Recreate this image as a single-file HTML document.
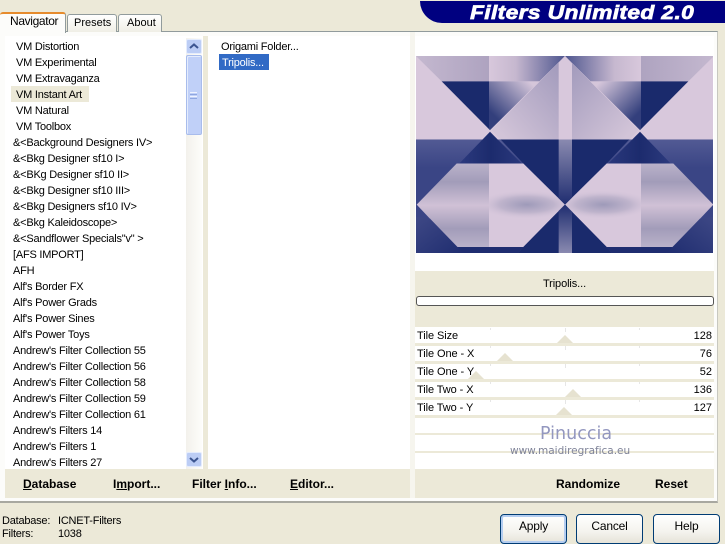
<!DOCTYPE html>
<html><head><meta charset="utf-8">
<style>
html,body{margin:0;padding:0}
body{width:725px;height:535px;overflow:hidden;background:#ece9d8;position:relative;font-family:"Liberation Sans",sans-serif;font-size:11px;color:#000}
div{position:absolute;box-sizing:border-box}
.t{white-space:nowrap;line-height:18px;height:18px;letter-spacing:-.22px}
.b{font-weight:bold;white-space:nowrap;line-height:16px;font-size:12px;top:476px}
.b u{text-decoration:underline}
.btn{top:514px;width:67px;height:30px;border:1px solid #003c74;border-radius:4px;background:linear-gradient(#fff,#f4f3ee 60%,#e6e3d8);text-align:center;line-height:22px;font-size:12px;letter-spacing:-.2px}
.row{left:415px;width:299px;background:#fff}
.ln{left:415px;width:299px;height:3px;background:#ece9d8}
.tri{width:0;height:0;border-left:8px solid transparent;border-right:8px solid transparent;border-bottom:8px solid #e6e2d0}
.lb{left:417px;line-height:18px;white-space:nowrap;letter-spacing:-.08px}
.val{right:13px;line-height:18px}
.tick{width:1px;height:2px;background:#e6e6e6}
</style></head><body>

<!-- main panel -->
<div style="left:0;top:31px;width:718px;height:472px;background:#fcfcfa;border-top:1px solid #919b9c;border-right:1px solid #c8c8c0;border-bottom:2px solid #a8a8a0"></div>

<!-- tabs -->
<div style="left:0;top:12px;width:66px;height:21px;background:#fcfcfa;border-top:2px solid #e68b2c;border-right:1px solid #919b9c;border-radius:3px 3px 0 0"></div>
<div class="t" style="left:10px;top:12px;font-size:12px;letter-spacing:-.35px">Navigator</div>
<div style="left:67px;top:14px;width:50px;height:18px;background:linear-gradient(#fff,#f0efe6);border:1px solid #919b9c;border-bottom:0;border-radius:3px 3px 0 0"></div>
<div class="t" style="left:74px;top:14px;letter-spacing:0">Presets</div>
<div style="left:118px;top:14px;width:44px;height:18px;background:linear-gradient(#fff,#f0efe6);border:1px solid #919b9c;border-bottom:0;border-radius:3px 3px 0 0"></div>
<div class="t" style="left:127px;top:14px;letter-spacing:0">About</div>

<!-- logo -->
<div style="left:420px;top:1px;width:305px;height:22px;background:#000080;border-radius:0 0 0 26px"></div>
<div style="left:470px;top:2px;line-height:22px;font-size:19.5px;font-weight:bold;font-style:italic;color:#fff;white-space:nowrap;letter-spacing:.3px;-webkit-text-stroke:.7px #fff;transform-origin:0 50%;transform:scaleX(1.17)">Filters Unlimited 2.0</div>

<!-- white zones -->
<div style="left:5px;top:36px;width:198px;height:433px;background:#fff"></div>
<div style="left:203px;top:36px;width:5px;height:433px;background:#ece9d8"></div>
<div style="left:208px;top:36px;width:202px;height:433px;background:#fff"></div>
<div style="left:410px;top:32px;width:5px;height:466px;background:#f6f5ee"></div>
<div style="left:415px;top:36px;width:299px;height:235px;background:#fff"></div>

<!-- list -->
<div style="left:11px;top:86px;width:78px;height:16px;background:#ece9d8"></div>
<div class="t" style="left:16px;top:38px">VM Distortion</div>
<div class="t" style="left:16px;top:54px">VM Experimental</div>
<div class="t" style="left:16px;top:70px">VM Extravaganza</div>
<div class="t" style="left:16px;top:86px">VM Instant Art</div>
<div class="t" style="left:16px;top:102px">VM Natural</div>
<div class="t" style="left:16px;top:118px">VM Toolbox</div>
<div class="t" style="left:13px;top:134px">&amp;&lt;Background Designers IV&gt;</div>
<div class="t" style="left:13px;top:150px">&amp;&lt;Bkg Designer sf10 I&gt;</div>
<div class="t" style="left:13px;top:166px">&amp;&lt;BKg Designer sf10 II&gt;</div>
<div class="t" style="left:13px;top:182px">&amp;&lt;Bkg Designer sf10 III&gt;</div>
<div class="t" style="left:13px;top:198px">&amp;&lt;Bkg Designers sf10 IV&gt;</div>
<div class="t" style="left:13px;top:214px">&amp;&lt;Bkg Kaleidoscope&gt;</div>
<div class="t" style="left:13px;top:230px">&amp;&lt;Sandflower Specials"v" &gt;</div>
<div class="t" style="left:13px;top:246px">[AFS IMPORT]</div>
<div class="t" style="left:13px;top:262px">AFH</div>
<div class="t" style="left:13px;top:278px">Alf's Border FX</div>
<div class="t" style="left:13px;top:294px">Alf's Power Grads</div>
<div class="t" style="left:13px;top:310px">Alf's Power Sines</div>
<div class="t" style="left:13px;top:326px">Alf's Power Toys</div>
<div class="t" style="left:13px;top:342px">Andrew's Filter Collection 55</div>
<div class="t" style="left:13px;top:358px">Andrew's Filter Collection 56</div>
<div class="t" style="left:13px;top:374px">Andrew's Filter Collection 58</div>
<div class="t" style="left:13px;top:390px">Andrew's Filter Collection 59</div>
<div class="t" style="left:13px;top:406px">Andrew's Filter Collection 61</div>
<div class="t" style="left:13px;top:422px">Andrew's Filters 14</div>
<div class="t" style="left:13px;top:438px">Andrew's Filters 1</div>
<div class="t" style="left:13px;top:454px;height:15px;overflow:hidden">Andrew's Filters 27</div>

<!-- scrollbar -->
<div style="left:186px;top:38px;width:16px;height:431px;background:linear-gradient(90deg,#f3f1ec,#fdfdfa)"></div>
<div style="left:186px;top:39px;width:16px;height:15px;background:#bccdf5;border:1px solid #e4ecfd;border-radius:2px"></div>
<svg style="position:absolute;left:189px;top:43px" width="10" height="7"><path d="M1 5 L5 1.5 L9 5" fill="none" stroke="#3c5590" stroke-width="2"/></svg>
<div style="left:186px;top:55px;width:16px;height:80px;background:#c0d0f8;border:1px solid #a8bcec;border-radius:2px;box-shadow:inset 1px 1px 0 #e4ecfd"></div>
<div style="left:190px;top:92px;width:7px;height:1px;background:#eef2fe;box-shadow:0 2px 0 #8fa6e0,0 4px 0 #eef2fe,0 6px 0 #8fa6e0"></div>
<div style="left:186px;top:452px;width:16px;height:15px;background:#bccdf5;border:1px solid #e4ecfd;border-radius:2px"></div>
<svg style="position:absolute;left:189px;top:456px" width="10" height="7"><path d="M1 2 L5 5.5 L9 2" fill="none" stroke="#3c5590" stroke-width="2"/></svg>

<!-- middle list -->
<div class="t" style="left:221px;top:38px">Origami Folder...</div>
<div style="left:219px;top:54px;width:50px;height:16px;background:#316ac5"></div>
<div class="t" style="left:222px;top:54px;color:#fff">Tripolis...</div>

<!-- preview -->
<svg style="position:absolute;left:416px;top:56px" width="297" height="197" viewBox="18 18 891 590" preserveAspectRatio="none">
<defs>
<linearGradient id="g1" x1="0" x2="1" y1="0" y2="0"><stop offset="0" stop-color="#c4b8cf"/><stop offset="1" stop-color="#aea3c0"/></linearGradient>
<linearGradient id="g2" x1="0" x2="1" y1="0" y2="0"><stop offset="0" stop-color="#d8c8dc"/><stop offset=".35" stop-color="#c6b8cf"/><stop offset="1" stop-color="#4f568f"/></linearGradient>
<linearGradient id="g3" x1="1" x2="0" y1="0" y2="1"><stop offset=".1" stop-color="#d5c6da"/><stop offset=".8" stop-color="#333f7c"/></linearGradient>
<linearGradient id="g4" x1="0" x2="1" y1="1" y2="0"><stop offset=".1" stop-color="#d2c4d8"/><stop offset="1" stop-color="#9d96b9"/></linearGradient>
<linearGradient id="g5" x1="0" x2="0" y1="0" y2="1"><stop offset="0" stop-color="#525a94"/><stop offset=".25" stop-color="#3a4585"/><stop offset="1" stop-color="#3a4585"/></linearGradient>
<linearGradient id="g6" x1="0" x2="0" y1="0" y2="1"><stop offset="0" stop-color="#8a8ab0"/><stop offset="1" stop-color="#1f2d70"/></linearGradient>
<linearGradient id="g7" x1="0" x2="0" y1="0" y2="1"><stop offset="0" stop-color="#1f2d70"/><stop offset="1" stop-color="#8a8ab0"/></linearGradient>
<linearGradient id="g8" x1="0" x2="0" y1="0" y2="1"><stop offset="0" stop-color="#bab2ca"/><stop offset=".22" stop-color="#a29cb9"/><stop offset=".5" stop-color="#d0c1d6"/><stop offset=".78" stop-color="#a29cb9"/><stop offset="1" stop-color="#bab2ca"/></linearGradient>
<radialGradient id="g10" cx=".5" cy=".5" r=".5"><stop offset="0" stop-color="#9e9ab9"/><stop offset=".55" stop-color="#bfb4cc"/><stop offset="1" stop-color="#d8c8dc" stop-opacity="0"/></radialGradient>
<linearGradient id="g12" x1="0" x2="1" y1="0" y2="1"><stop offset="0" stop-color="#3e4885"/><stop offset="1" stop-color="#1f2d70"/></linearGradient>
<linearGradient id="g15" x1="0" x2="1" y1="0" y2="0"><stop offset="0" stop-color="#2c3a7e"/><stop offset=".5" stop-color="#1c2b6d"/><stop offset="1" stop-color="#2a387c"/></linearGradient>
<clipPath id="c"><rect x="18" y="18" width="891" height="590"/></clipPath>
<clipPath id="hr"><polygon points="237,340 340,340 465,463 340,590 237,590"/></clipPath>
<g id="half">
  <rect x="18" y="18" width="447" height="250" fill="#d8c8dc"/>
  <polygon points="18,18 237,18 237,94 95,94" fill="url(#g1)"/>
  <polygon points="237,18 465,18 388,94 237,94" fill="url(#g2)"/>
  <polygon points="95,94 237,94 237,237" fill="#1a2a6c"/>
  <polygon points="237,94 388,94 240,240 237,237" fill="url(#g3)"/>
  <polygon points="245,240 465,18 465,268 272,268" fill="url(#g4)"/>
  <rect x="18" y="268" width="447" height="340" fill="url(#g5)"/>
  <polygon points="272,268 465,268 465,463 340,340" fill="#1a2a6c"/>
  <polygon points="240,245 335,340 148,340" fill="url(#g15)"/>
  <polygon points="20,463 140,340 237,340 237,590 140,590" fill="url(#g8)"/>
  <polygon points="237,340 340,340 465,463 340,590 237,590" fill="#d8c8dc"/>
  <g clip-path="url(#hr)"><ellipse cx="350" cy="463" rx="150" ry="44" fill="url(#g10)"/></g>
  <polygon points="465,463 465,608 325,608 340,590" fill="#1a2a6c"/>
  <polygon points="140,590 340,590 325,608 160,608" fill="#1f2d70"/>
  <polygon points="18,500 18,608 160,608 60,505" fill="url(#g12)"/>
</g>
</defs>
<g clip-path="url(#c)">
<use href="#half"/>
<use href="#half" transform="translate(930,0) scale(-1,1)"/>
<polygon points="465,18 486,40 486,268 446,268 446,38" fill="#d8c8dc"/>
<polygon points="446,268 486,268 486,442 465,463 446,444" fill="url(#g6)"/>
<polygon points="465,463 486,484 486,608 446,608 446,482" fill="url(#g7)"/>
</g>
</svg>

<!-- right panel controls -->
<div style="left:415px;top:271px;width:299px;height:56px;background:#ece9d8"></div>
<div style="left:415px;top:276px;width:299px;text-align:center;line-height:16px;letter-spacing:-.1px">Tripolis...</div>
<div style="left:416px;top:296px;width:298px;height:10px;background:#fff;border:1px solid #555;border-radius:3px"></div>

<div class="row" style="top:327px;height:142px"></div>
<div class="ln" style="top:343px"></div>
<div class="ln" style="top:361px"></div>
<div class="ln" style="top:379px"></div>
<div class="ln" style="top:397px"></div>
<div class="ln" style="top:415px"></div>
<div class="ln" style="top:433px;height:2px"></div>
<div class="ln" style="top:451px;height:2px"></div>

<div class="tri" style="left:557px;top:335px"></div>
<div class="tri" style="left:497px;top:353px"></div>
<div class="tri" style="left:468px;top:371px"></div>
<div class="tri" style="left:565px;top:389px"></div>
<div class="tri" style="left:556px;top:407px"></div>

<div class="tick" style="left:490px;top:328px"></div><div class="tick" style="left:565px;top:328px;height:4px"></div><div class="tick" style="left:639px;top:328px"></div>
<div class="tick" style="left:490px;top:346px"></div><div class="tick" style="left:565px;top:346px;height:4px"></div><div class="tick" style="left:639px;top:346px"></div>
<div class="tick" style="left:490px;top:364px"></div><div class="tick" style="left:565px;top:364px;height:4px"></div><div class="tick" style="left:639px;top:364px"></div>
<div class="tick" style="left:490px;top:382px"></div><div class="tick" style="left:565px;top:382px;height:4px"></div><div class="tick" style="left:639px;top:382px"></div>
<div class="tick" style="left:490px;top:400px"></div><div class="tick" style="left:565px;top:400px;height:4px"></div><div class="tick" style="left:639px;top:400px"></div>

<div class="lb" style="top:327px">Tile Size</div><div class="val" style="top:327px">128</div>
<div class="lb" style="top:345px">Tile One - X</div><div class="val" style="top:345px">76</div>
<div class="lb" style="top:363px">Tile One - Y</div><div class="val" style="top:363px">52</div>
<div class="lb" style="top:381px">Tile Two - X</div><div class="val" style="top:381px">136</div>
<div class="lb" style="top:399px">Tile Two - Y</div><div class="val" style="top:399px">127</div>

<!-- watermark -->
<div style="left:540px;top:424px;font-family:'DejaVu Sans',sans-serif;font-size:17.5px;line-height:20px;color:#9397bf;white-space:nowrap">Pinuccia</div>
<div style="left:510px;top:444px;font-family:'DejaVu Sans',sans-serif;font-size:10.5px;line-height:14px;color:#7f8398;white-space:nowrap;letter-spacing:-.02px">www.maidiregrafica.eu</div>

<!-- bottom bars -->
<div style="left:5px;top:469px;width:405px;height:29px;background:#ece9d8"></div>
<div style="left:415px;top:469px;width:299px;height:29px;background:#ece9d8"></div>
<div class="b" style="left:23px"><u>D</u>atabase</div>
<div class="b" style="left:113px">I<u>m</u>port...</div>
<div class="b" style="left:192px">Filter <u>I</u>nfo...</div>
<div class="b" style="left:290px"><u>E</u>ditor...</div>
<div class="b" style="left:556px">Randomize</div>
<div class="b" style="left:655px">Reset</div>

<!-- status -->
<div class="t" style="left:2px;top:512px">Database:</div>
<div class="t" style="left:58px;top:512px">ICNET-Filters</div>
<div class="t" style="left:2px;top:525px">Filters:</div>
<div class="t" style="left:58px;top:525px">1038</div>

<!-- buttons -->
<div class="btn" style="left:500px;box-shadow:inset 0 0 0 2px #b4cdf0">Apply</div>
<div class="btn" style="left:576px">Cancel</div>
<div class="btn" style="left:653px">Help</div>
</body></html>
